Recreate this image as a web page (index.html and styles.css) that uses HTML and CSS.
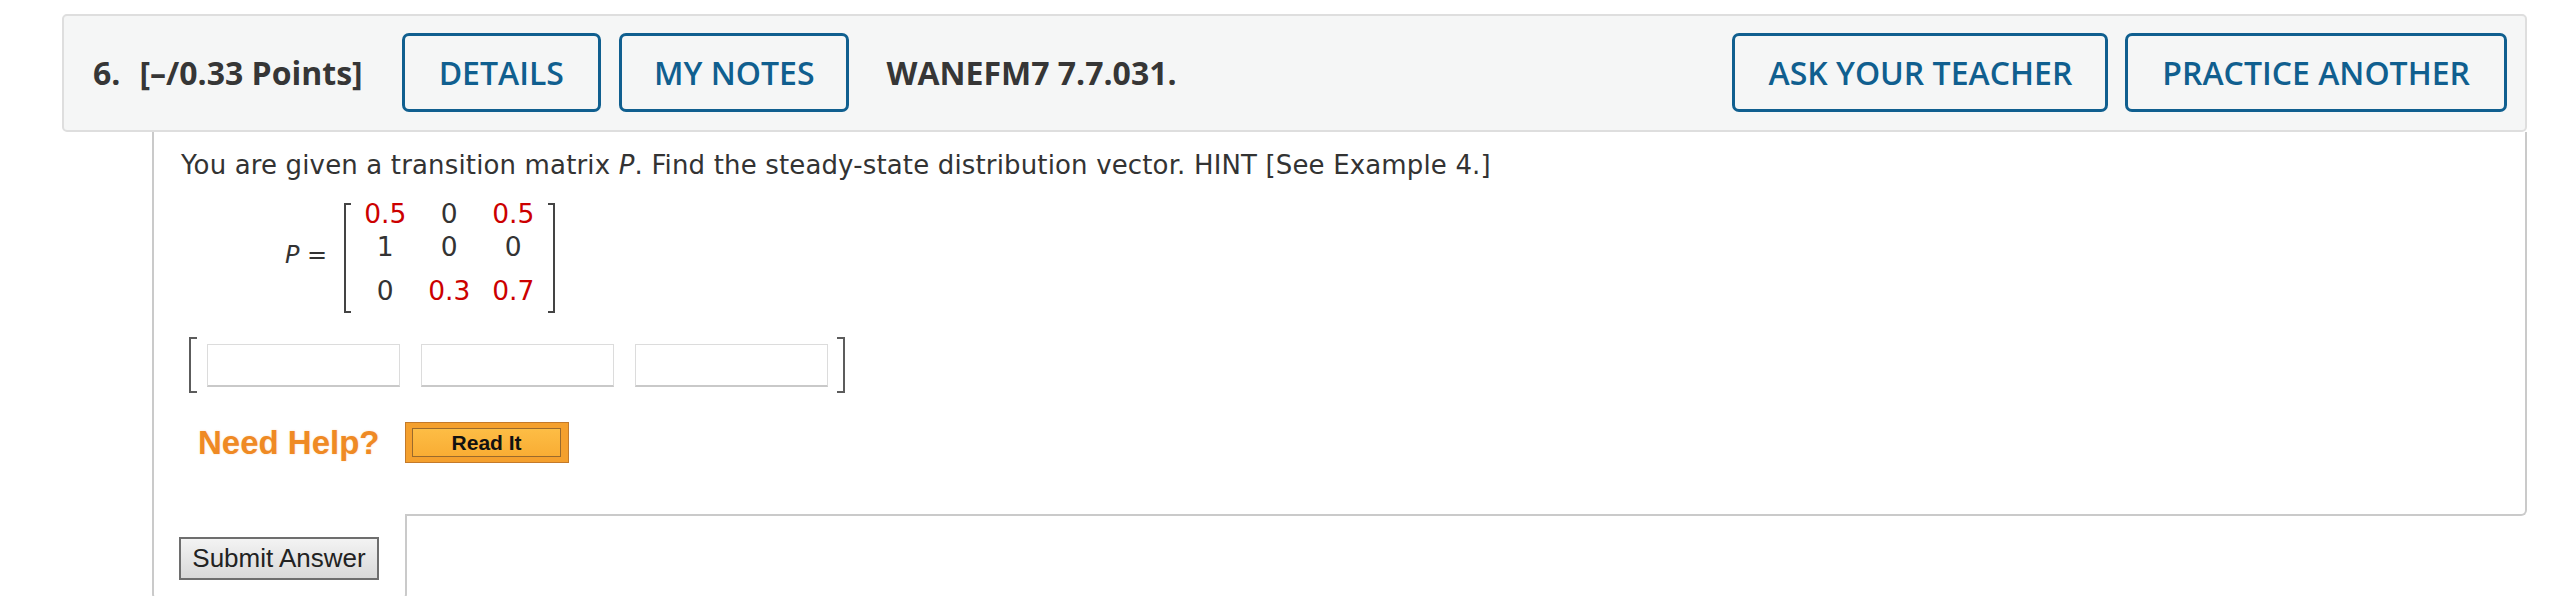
FILE: index.html
```html
<!DOCTYPE html>
<html lang="en">
<head>
<meta charset="utf-8">
<title>Question 6</title>
<link rel="stylesheet" href="styles.css">
</head>
<body>
<div class="page">
  <div class="qhead">
    <span class="qnum">6.</span>
    <span class="qpts">[–/0.33 Points]</span>
    <button class="hbtn details">DETAILS</button>
    <button class="hbtn notes">MY NOTES</button>
    <span class="qcode">WANEFM7 7.7.031.</span>
    <span class="spacer"></span>
    <button class="hbtn ask">ASK YOUR TEACHER</button>
    <button class="hbtn">PRACTICE ANOTHER</button>
  </div>
  <div class="qbody">
    <p class="qtext">You are given a transition matrix <i>P</i>. Find the steady-state distribution vector. HINT [See Example 4.]</p>
    <div class="mrow">
      <span class="plabel"><i>P</i> =</span>
      <div class="matrix">
        <span class="brk left"></span>
        <div class="mgrid">
          <span class="red">0.5</span><span>0</span><span class="red">0.5</span>
          <span>1</span><span>0</span><span>0</span>
          <span>0</span><span class="red">0.3</span><span class="red">0.7</span>
        </div>
        <span class="brk right"></span>
      </div>
    </div>
    <div class="vrow">
      <span class="vbrk left"></span>
      <input class="ans" type="text">
      <input class="ans" type="text">
      <input class="ans" type="text">
      <span class="vbrk right"></span>
    </div>
    <div class="help">
      <span class="needhelp">Need Help?</span>
      <span class="readit"><span class="readit-in">Read It</span></span>
    </div>
  </div>
  <div class="subtab"><button class="submit">Submit Answer</button></div>
</div>
</body>
</html>
```
FILE: styles.css
```css
html, body {
  margin: 0;
  padding: 0;
  background: #fff;
}
body {
  width: 2560px;
  height: 596px;
  overflow: hidden;
}
.page {
  padding: 14px 33px 0 62px;
}
.qhead {
  display: flex;
  align-items: center;
  border: 2px solid #dedede;
  border-radius: 5px;
  background: #f5f6f6;
  padding: 17px 18px 18px 29px;
  font-family: "Open Sans", sans-serif;
}
.qnum, .qpts, .qcode {
  font-weight: 700;
  font-size: 32px;
  color: #363636;
}
.qnum {
  margin-right: 19px;
}
.hbtn {
  box-sizing: border-box;
  height: 79px;
  padding: 0 34px;
  border: 3px solid #105f8f;
  border-radius: 7px;
  background: transparent;
  color: #105f8f;
  font-family: "Open Sans", sans-serif;
  font-weight: 600;
  font-size: 32px;
}
.details {
  margin-left: 39px;
}
.notes {
  margin-left: 18px;
  padding: 0 32px;
}
.qcode {
  margin-left: 37px;
}
.spacer {
  flex: 1;
}
.ask {
  margin-right: 17px;
  padding: 0 33px;
}
.qbody {
  margin-left: 90px;
  border: 2px solid #cacaca;
  border-top: none;
  border-bottom-right-radius: 6px;
  padding: 18px 0 51px 27px;
  font-family: "DejaVu Sans", Verdana, sans-serif;
  color: #333;
}
.qtext {
  margin: 0;
  font-size: 26px;
  line-height: 30px;
  letter-spacing: 0.15px;
}
.mrow {
  display: flex;
  align-items: center;
  margin-top: 17px;
  padding-left: 104px;
}
.plabel {
  font-size: 24px;
  line-height: 30px;
  margin-right: 17px;
}
.matrix {
  display: flex;
  align-items: flex-start;
}
.brk {
  box-sizing: border-box;
  width: 7px;
  height: 110px;
  margin-top: 6px;
  border: 2px solid #444;
}
.brk.left {
  border-right: none;
}
.brk.right {
  border-left: none;
  margin-left: 3px;
}
.mgrid {
  display: grid;
  grid-template-columns: repeat(3, 64px);
  grid-template-rows: 33px 44px 33px;
  justify-items: center;
  font-size: 26.5px;
  line-height: 33px;
  margin-left: 2px;
}
.red {
  color: #cc0000;
}
.vrow {
  display: flex;
  align-items: center;
  height: 56px;
  margin-top: 24px;
  margin-left: 8px;
}
.vbrk {
  box-sizing: border-box;
  width: 8px;
  height: 56px;
  border: 2px solid #5c5c5c;
}
.vbrk.left {
  border-right: none;
  margin-right: 10px;
}
.vbrk.right {
  border-left: none;
  margin-left: 9px;
}
.ans {
  box-sizing: border-box;
  width: 193px;
  height: 43px;
  margin: 0 21px 0 0;
  padding: 0;
  border: 1px solid #dcdcdc;
  border-bottom: 2px solid #c9c9c9;
  background: #fff;
}
.ans:nth-of-type(3) {
  margin-right: 0;
}
.help {
  display: flex;
  align-items: center;
  height: 41px;
  margin-top: 29px;
  margin-left: 17px;
}
.needhelp {
  font-family: "Liberation Sans", Arial, sans-serif;
  font-weight: 700;
  font-size: 33px;
  line-height: 41px;
  color: #ef8a24;
  text-shadow: 0 0 2px rgba(240, 150, 60, 0.35);
}
.readit {
  box-sizing: border-box;
  display: flex;
  align-items: center;
  justify-content: center;
  width: 164px;
  height: 41px;
  margin-left: 25px;
  border: 1px solid #c47a2a;
  background: #f4a02e;
}
.readit-in {
  box-sizing: border-box;
  display: flex;
  align-items: center;
  justify-content: center;
  width: 149px;
  height: 29px;
  border: 1px solid #9a6a2c;
  background: linear-gradient(#fdbd45, #f9ad34);
  font-family: "Liberation Sans", Arial, sans-serif;
  font-weight: 700;
  font-size: 21px;
  color: #111;
}
.subtab {
  box-sizing: border-box;
  width: 255px;
  height: 86px;
  margin-left: 90px;
  margin-top: -2px;
  padding: 23px 0 0 25px;
  border: 2px solid #cacaca;
  border-top: none;
  border-radius: 0 0 6px 6px;
  background: #fff;
}
.submit {
  box-sizing: border-box;
  width: 200px;
  height: 43px;
  padding: 0;
  border: 2px solid #6e6e6e;
  background: linear-gradient(#f3f3f3, #d9d9d9);
  font-family: "Liberation Sans", Arial, sans-serif;
  font-size: 26px;
  color: #222;
}
```
